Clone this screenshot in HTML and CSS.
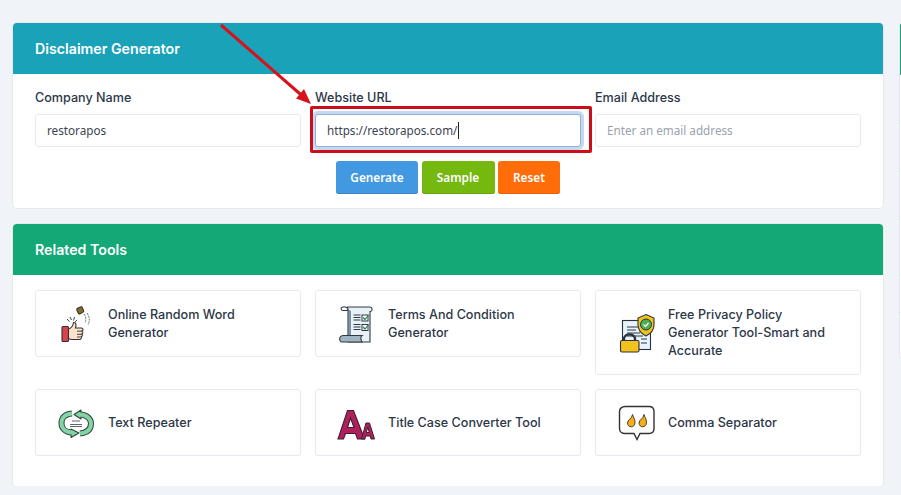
FILE: index.html
```html
<!DOCTYPE html>
<html lang="en">
<head>
<meta charset="utf-8">
<title>Disclaimer Generator</title>
<link rel="stylesheet" href="styles.css">
</head>
<body>
<div class="page">
  <main class="main">
    <section class="card">
      <h2 class="card-head head-teal">Disclaimer Generator</h2>
      <form class="form">
        <div class="fields">
          <div class="field">
            <label class="label" for="company">Company Name</label>
            <input class="input" id="company" type="text" value="restorapos">
          </div>
          <div class="field">
            <label class="label" for="url">Website URL</label>
            <div class="focus-wrap">
              <input class="input input-focus" id="url" type="text" value="https://restorapos.com/">
              <span class="caret"></span>
              <span class="red-box"></span>
            </div>
          </div>
          <div class="field">
            <label class="label" for="email">Email Address</label>
            <input class="input" id="email" type="text" placeholder="Enter an email address">
          </div>
        </div>
        <div class="actions">
          <button class="btn btn-blue" type="button">Generate</button>
          <button class="btn btn-green" type="button">Sample</button>
          <button class="btn btn-orange" type="button">Reset</button>
        </div>
      </form>
    </section>

    <section class="card">
      <h2 class="card-head head-green">Related Tools</h2>
      <div class="tools">
        <a class="tool">
          <svg class="icon" viewBox="0 0 36 36">
            <rect x="21.500" y="1.500" width="6" height="6" rx="1.500" fill="#8a6a2c" stroke="#33302a" stroke-width="1" transform="rotate(-25 24 5)"/>
            <path d="M28 8q3 4 1 9M31 7q4 6 1 12" fill="none" stroke="#555" stroke-width=".9" stroke-dasharray="2 1"/>
            <path d="M14 11l1.500 3M11 13l2.500 2.500M18.500 11l-1 3.500M21 14l-2 2" stroke="#444" stroke-width="1"/>
            <rect x="6" y="20.500" width="6.500" height="15" rx="1" fill="#d8434d" stroke="#333" stroke-width="1.100"/>
            <path d="M12.500 23c3-1 4.500-3 5-6.500 2.500-.5 3 2 2 5.500h6c1.800 0 2 2.500.5 3 1.200.8 1 2.800-.2 3 .9.800.6 2.600-.6 2.800.5 1.200-.1 2.700-1.700 2.700H16c-1.500 0-2.500-.5-3.500-1z" fill="#fde3cb" stroke="#333" stroke-width="1.100"/>
            <path d="M21 25.200h5M21 28.300h4.500M21 31h3.500" stroke="#333" stroke-width=".9"/>
          </svg>
          <span class="tool-name">Online Random Word Generator</span>
        </a>
        <a class="tool">
          <svg class="icon" viewBox="0 0 36 36">
            <path d="M11 1h23c2.500 0 3 4 .5 4.500H34V36H12V5c0-2-.5-4-1-4z" fill="#e8f1f6" stroke="#2e3b44" stroke-width="1.100"/>
            <path d="M12 3v26h3V5" fill="#5d7686" opacity=".75"/>
            <path d="M6 1.200c3-1 5.500 0 6 2.500M6 1.200C4.500 2 5 4.500 7 4.500h5" fill="none" stroke="#2e3b44" stroke-width="1.100"/>
            <path d="M17.500 9h7M17.500 11.500h7M17.500 14h7M17.500 18.500h7M17.500 21h7M17.500 23.500h7" stroke="#2e3b44" stroke-width="1.100"/>
            <rect x="26" y="9" width="6" height="6" fill="#fff" stroke="#2e3b44"/>
            <rect x="26" y="18.500" width="6" height="6" fill="#fff" stroke="#2e3b44"/>
            <path d="M27 11.500l2 2 3.500-4.500M27 21l2 2 3.500-4.500" fill="none" stroke="#2f7d57" stroke-width="1.200"/>
            <path d="M7 29.500h19c-1.500 1-1.500 4 0 6.500H6c-3 0-3.500-6 1-6.500z" fill="#9fb6c2" stroke="#2e3b44" stroke-width="1.100"/>
          </svg>
          <span class="tool-name">Terms And Condition Generator</span>
        </a>
        <a class="tool">
          <svg class="icon" viewBox="0 0 36 36">
            <rect x="6.500" y="5.500" width="28" height="29" fill="#e9f3fb" stroke="#2a3440" stroke-width="1.100"/>
            <path d="M11 12h11M11 15h9M11 18h13M11 21h16M25 24h6M25 28h6" stroke="#2a3440" stroke-width="1"/>
            <path d="M30 -.5l8 3.500v7c0 6-4 9-8 11-4-2-8-5-8-11V3z" fill="#f3c21c" stroke="#2a3440" stroke-width="1.100"/>
            <circle cx="30" cy="9.500" r="5.500" fill="#4caf50" stroke="#2a3440"/>
            <path d="M27.500 9.500l2 2 3-3.500" fill="none" stroke="#fff" stroke-width="1.200"/>
            <path d="M8 26v-3a6 6 0 0 1 11 0v3" fill="none" stroke="#2a3440" stroke-width="2.400"/>
            <rect x="4.500" y="25.500" width="18.500" height="11.500" rx="1.500" fill="#f3c21c" stroke="#2a3440" stroke-width="1.100"/>
          </svg>
          <span class="tool-name">Free Privacy Policy Generator Tool-Smart and Accurate</span>
        </a>
        <a class="tool">
          <svg class="icon" viewBox="0 0 36 36">
            <path d="M16 8.500C7 9.500 5.500 14 5.500 18.500S9 27 15 27.500" fill="none" stroke="#2a4a3a" stroke-width="6"/>
            <path d="M15 24l8 4-8 4.500z" fill="#86d3a6" stroke="#2a4a3a" stroke-width="1.100" stroke-linejoin="round"/>
            <path d="M16 8.500C7 9.500 5.500 14 5.500 18.500S9 27 16 27.500" fill="none" stroke="#86d3a6" stroke-width="4"/>
            <path d="M24 28.500c9-1 11-5.500 11-10s-4-8.500-10-9" fill="none" stroke="#2a4a3a" stroke-width="6"/>
            <path d="M25 5l-7 4.500 7 4.500z" fill="#86d3a6" stroke="#2a4a3a" stroke-width="1.100" stroke-linejoin="round"/>
            <path d="M24 28.500c9-1 11-5.500 11-10s-4-8.500-11-9" fill="none" stroke="#86d3a6" stroke-width="4"/>
            <path d="M16 16h8M14 19.500h12M14 21.500h12" stroke="#5b6770" stroke-width="1.100"/>
          </svg>
          <span class="tool-name">Text Repeater</span>
        </a>
        <a class="tool">
          <svg class="icon" viewBox="0 0 36 36">
            <path d="M11.500 5.500h6L28.500 34h-7l-2-5.500H9.500L7.500 34H2zM14.500 13l-3 9.500h6.500z" fill="#b0215c" fill-rule="evenodd" stroke="#3a2030" stroke-width="1.100"/>
            <path d="M30 18h3.500L38.500 34h-3.500l-.8-3h-4.500l-.8 3H25.500zM31.800 22l-1.500 5.500h3z" fill="#b0215c" fill-rule="evenodd" stroke="#3a2030" stroke-width="1"/>
          </svg>
          <span class="tool-name">Title Case Converter Tool</span>
        </a>
        <a class="tool">
          <svg class="icon" viewBox="0 0 36 36">
            <path d="M9 1.500h24c3 0 5 2 5 5v17c0 3-2 5-5 5h-9l-3 6-3-6H9c-3 0-5.500-2-5.500-5v-17c0-3 2.500-5 5.500-5z" fill="#fff" stroke="#333" stroke-width="1.400"/>
            <path d="M16.500 9.500c1 3.500 2.500 4.500 2.500 8 0 2.600-1.700 4.300-3.800 4.300s-3.700-1.700-3.700-3.700c0-3.600 4.500-4 5-8.600z" fill="#f5ad1c" stroke="#4a3a1a"/>
            <path d="M28 9.500c1 3.500 2.500 4.500 2.500 8 0 2.600-1.700 4.300-3.800 4.300S23 20.100 23 18.100c0-3.600 4.500-4 5-8.600z" fill="#f5ad1c" stroke="#4a3a1a"/>
          </svg>
          <span class="tool-name">Comma Separator</span>
        </a>
      </div>
    </section>
  </main>

  <aside class="side">
    <div class="side-head"></div>
    <div class="side-row side-row-a"></div>
    <div class="side-row side-row-b"></div>
    <div class="side-row side-row-b"></div>
    <div class="side-row side-row-c"></div>
    <div class="side-row side-row-d"></div>
    <div class="side-row side-row-e"></div>
  </aside>
</div>

<svg class="arrow" viewBox="0 0 901 495" width="901" height="495">
  <path d="M221 25L303 96.500" stroke="#d8121c" stroke-width="3" fill="none"/>
  <path d="M311 104L296 98.500 304 89z" fill="#d8121c"/>
</svg>
</body>
</html>
```

FILE: styles.css
```css
* { box-sizing: border-box; }
html, body { margin: 0; height: 100%; }
body {
  background: #f0f3f8;
  font-family: Inter, "Liberation Sans", sans-serif;
  color: #2d3748;
  overflow: hidden;
}
.page {
  display: flex;
  align-items: flex-start;
  gap: 16px;
  padding: 23px 0 0 13px;
  width: 901px;
  overflow: hidden;
}
.main {
  width: 870px;
  flex: none;
  display: flex;
  flex-direction: column;
  gap: 16px;
}
.card {
  background: #fff;
  border-radius: 4px;
  box-shadow: 0 0 0 1px #e6eaf0;
}
.card-head {
  margin: 0;
  height: 51px;
  padding: 0 22px;
  display: flex;
  align-items: center;
  color: #fff;
  font-size: 14.200px;
  font-weight: 600;
  border-radius: 4px 4px 0 0;
}
.head-teal { background: #19a2b8; }
.head-green { background: #13a876; }
.form { padding: 16px 22px 14px; }
.fields {
  display: grid;
  grid-template-columns: repeat(3, 266px);
  column-gap: 14px;
}
.field { display: flex; flex-direction: column; }
.label {
  font-size: 12.600px;
  font-weight: 500;
  line-height: 16px;
  margin-bottom: 8px;
  color: #2d3748;
}
.input {
  display: block;
  width: 100%;
  height: 33px;
  padding: 0 11px 2px;
  border: 1px solid #e6e9ef;
  border-radius: 3px;
  background: #fff;
  outline: none;
  font-family: "Noto Sans", sans-serif;
  font-size: 11.700px;
  color: #3b4450;
}
.input::placeholder { color: #9aa2ad; opacity: 1; }
.input-focus {
  border-color: #8fb0d8;
  box-shadow: 0 0 0 3px #c6d9f1;
}
.focus-wrap { position: relative; }
.caret {
  position: absolute;
  left: 143px;
  top: 8px;
  width: 1px;
  height: 17px;
  background: #222;
}
.red-box {
  position: absolute;
  left: -5px;
  right: -11px;
  top: -8px;
  bottom: -6px;
  border: 3px solid #cd0d17;
  border-radius: 2px;
}
.actions {
  display: flex;
  justify-content: center;
  gap: 3.500px;
  margin-top: 14px;
}
.btn {
  height: 33px;
  border: 0;
  border-radius: 3px;
  color: #fff;
  font-family: "Noto Sans", sans-serif;
  font-size: 11.800px;
  font-weight: 600;
  padding: 0 0 2px;
}
.btn-blue { background: #4299e1; width: 82px; box-shadow: inset 0 -1px 0 #3a86c6; }
.btn-green { background: #75b80f; width: 73px; box-shadow: inset 0 -1px 0 #67a30e; }
.btn-orange { background: #ff6c0a; width: 62px; box-shadow: inset 0 -1px 0 #e26008; }
.tools {
  display: grid;
  grid-template-columns: repeat(3, 266px);
  gap: 14px;
  align-items: start;
  padding: 15px 22px 30px;
}
.tool {
  display: flex;
  align-items: center;
  min-height: 67px;
  padding: 14.500px 25px 14.500px 20px;
  background: #fff;
  border: 1px solid #e6e9ef;
  border-radius: 3px;
}
.icon {
  width: 36px;
  height: 36px;
  flex: none;
  margin-right: 16px;
  overflow: visible;
}
.tool-name {
  font-size: 12.600px;
  font-weight: 500;
  line-height: 18px;
  color: #2d3748;
}
.side {
  flex: 1;
  min-width: 0;
  height: 335px;
  background: #fff;
  border: 1px solid #e6e9ef;
  border-right: 0;
  border-radius: 4px 0 0 4px;
  overflow: hidden;
}
.side-head { height: 51px; background: #13a876; }
.side-row { border-bottom: 1px solid #eceff4; }
.side-row-a { height: 47px; }
.side-row-b { height: 48px; }
.side-row-c { height: 57px; }
.side-row-d { height: 38px; }
.side-row-e { height: 46px; border-bottom: 0; }
.arrow {
  position: absolute;
  left: 0;
  top: 0;
  pointer-events: none;
}
```
